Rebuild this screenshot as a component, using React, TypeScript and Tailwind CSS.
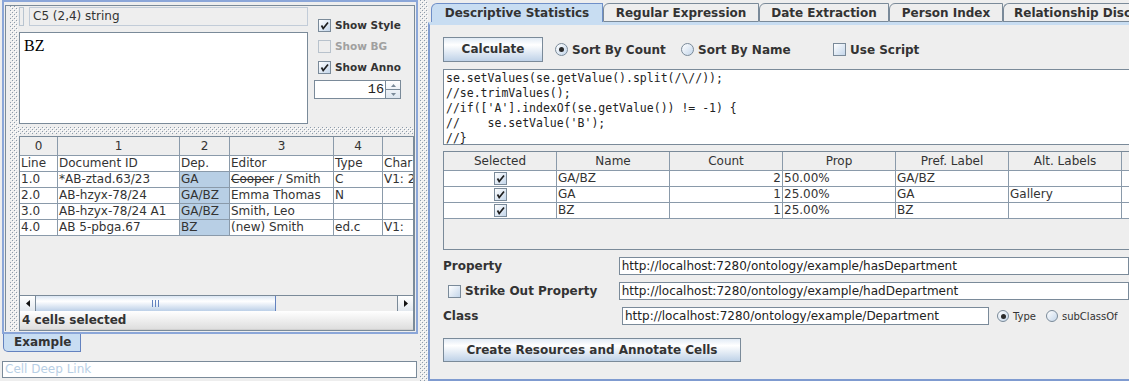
import React, { useId } from 'react';

const LINE = 'border-[#8a9aaa]';

function Bumps({ className }: { className: string }) {
  const id = useId().replace(/:/g, '');
  return (
    <div className={className}>
      <svg width="100%" height="100%">
        <defs>
          <pattern id={`b${id}`} width="4" height="4" patternUnits="userSpaceOnUse">
            <rect x="0" y="0" width="1" height="1" fill="#8e9cab" />
            <rect x="2" y="2" width="1" height="1" fill="#8e9cab" />
            <rect x="1" y="1" width="1" height="1" fill="#ffffff" />
            <rect x="3" y="3" width="1" height="1" fill="#ffffff" />
          </pattern>
        </defs>
        <rect width="100%" height="100%" fill={`url(#b${id})`} />
      </svg>
    </div>
  );
}

function CheckBox({ checked, disabled }: { checked?: boolean; disabled?: boolean }) {
  return (
    <span
      className={`inline-flex w-[13px] h-[13px] shrink-0 items-center justify-center border ${
        disabled
          ? 'border-[#b8c2cc] bg-[#eeeeee]'
          : 'border-[#7a8a99] bg-[linear-gradient(135deg,#ffffff,#c4d6ea)]'
      }`}
    >
      {checked && (
        <svg width="9" height="9" viewBox="0 0 9 9">
          <path d="M1.5 4.5 L3.2 7.5 L8 1.5" stroke="#1f1f1f" strokeWidth="1.7" fill="none" />
        </svg>
      )}
    </span>
  );
}

function Radio({ on, small }: { on?: boolean; small?: boolean }) {
  return (
    <span
      className={`inline-flex ${small ? 'w-[12px] h-[12px]' : 'w-[13px] h-[13px]'} shrink-0 items-center justify-center rounded-full border border-[#7a8a99] bg-[linear-gradient(135deg,#ffffff,#c4d6ea)]`}
    >
      {on && <span className="w-[5px] h-[5px] rounded-full bg-[#2a2a2a]" />}
    </span>
  );
}

const leftCols = ['w-[38px]', 'w-[122px]', 'w-[50px]', 'w-[104px]', 'w-[49px]', 'w-[40px]'];

const leftRows: React.ReactNode[][] = [
  ['Line', 'Document ID', 'Dep.', 'Editor', 'Type', 'Char'],
  ['1.0', '*AB-ztad.63/23', 'GA', <><s>Cooper</s> / Smith</>, 'C', 'V1: 2'],
  ['2.0', 'AB-hzyx-78/24', 'GA/BZ', 'Emma Thomas', 'N', ''],
  ['3.0', 'AB-hzyx-78/24 A1', 'GA/BZ', 'Smith, Leo', '', ''],
  ['4.0', 'AB 5-pbga.67', 'BZ', '(new) Smith', 'ed.c', 'V1:'],
];

const statRows = [
  ['GA/BZ', '2', '50.00%', 'GA/BZ', ''],
  ['GA', '1', '25.00%', 'GA', 'Gallery'],
  ['BZ', '1', '25.00%', 'BZ', ''],
];

const script = [
  'se.setValues(se.getValue().split(/\\//));',
  '//se.trimValues();',
  "//if(['A'].indexOf(se.getValue()) != -1) {",
  "//    se.setValue('B');",
  '//}',
];

const tabs = [
  { label: 'Descriptive Statistics', w: 'w-[172px]', active: true },
  { label: 'Regular Expression', w: 'w-[156px]' },
  { label: 'Date Extraction', w: 'w-[130px]' },
  { label: 'Person Index', w: 'w-[114px]' },
  { label: 'Relationship Disc', w: 'w-[126px]', last: true },
];

function CellEditor() {
  return (
    <div className="h-[121px] shrink-0 flex pl-[1px] pt-[1px]">
      <div className="w-[289px] shrink-0 flex flex-col">
        <div className="h-[19px] flex">
          <div className="w-[5px] border border-[#b8c4d0]" />
          <div className="ml-[5px] flex-1 border border-[#c2ccd8] pl-[3px] leading-[17px] text-[#333]">
            C5 (2,4) string
          </div>
        </div>
        <div className="mt-[6px] h-[92px] border border-[#7a8a99] bg-white px-[4px] pt-[1px] font-['Liberation_Serif',serif] text-[16px] text-black">
          BZ
        </div>
      </div>
      <div className="ml-[6px] w-[88px] shrink-0 flex flex-col pt-[12px]">
        {[
          { label: 'Show Style', checked: true },
          { label: 'Show BG', disabled: true },
          { label: 'Show Anno', checked: true },
        ].map((c) => (
          <div key={c.label} className="h-[13px] mb-[8px] flex items-center gap-[4px] pl-[4px]">
            <CheckBox checked={c.checked} disabled={c.disabled} />
            <span className={`text-[10.5px] font-bold ${c.disabled ? 'text-[#a0a0a0]' : 'text-[#333]'}`}>
              {c.label}
            </span>
          </div>
        ))}
        <div className="-mt-[2px] flex h-[19px] w-[87px] border border-[#7a8a99] bg-white">
          <div className="flex-1 text-right pr-[1px] leading-[17px] font-['Liberation_Mono',monospace] text-[13.5px] text-[#222]">
            16
          </div>
          <div className="w-[15px] border-l border-[#7a8a99] flex flex-col bg-[linear-gradient(#ffffff,#dde6f0)]">
            <div className="flex-1 border-b border-[#7a8a99] flex items-center justify-center">
              <svg width="5" height="3">
                <path d="M0 3 L2.5 0 L5 3Z" fill="#7a8a99" />
              </svg>
            </div>
            <div className="flex-1 flex items-center justify-center">
              <svg width="5" height="3">
                <path d="M0 0 L2.5 3 L5 0Z" fill="#7a8a99" />
              </svg>
            </div>
          </div>
        </div>
      </div>
    </div>
  );
}

function DataTable() {
  return (
    <div className="ml-[1px] mt-[2px] flex-1 min-h-0 flex flex-col border border-[#7a8a99] overflow-hidden">
      <div className="flex h-[19px] bg-[#eeeeee] shrink-0">
        {leftCols.map((w, i) => (
          <div key={i} className={`${w} shrink-0 border-r border-b ${LINE} text-center leading-[18px] text-[#333]`}>
            {i < 5 ? i : ''}
          </div>
        ))}
      </div>
      {leftRows.map((row, r) => (
        <div key={r} className="flex h-[16px] shrink-0 bg-white">
          {row.map((cell, i) => (
            <div
              key={i}
              className={`${leftCols[i]} shrink-0 border-r border-b ${LINE} pl-[1px] leading-[15px] whitespace-nowrap overflow-hidden ${
                i === 2 && r > 0 ? 'bg-[#b8cfe5]' : ''
              } text-[#333]`}
            >
              {cell}
            </div>
          ))}
        </div>
      ))}
      <div className="flex-1 bg-[#eeeeee]" />
      <div className="h-[16px] shrink-0 flex border-t border-[#7a8a99] bg-[#eeeeee]">
        <div className="w-[16px] shrink-0 border-r border-[#7a8a99] flex items-center justify-center bg-[linear-gradient(#ffffff,#e2e8ee)]">
          <svg width="4" height="7">
            <path d="M4 0 L0 3.5 L4 7Z" fill="#111" />
          </svg>
        </div>
        <div className="w-[240px] shrink-0 border-r border-[#6382bf] bg-[linear-gradient(#dbe6f3,#ffffff_35%,#bcd0e8)] flex items-center justify-center gap-[2px]">
          <span className="w-[1px] h-[7px] bg-[#6382bf]" />
          <span className="w-[1px] h-[7px] bg-[#6382bf]" />
          <span className="w-[1px] h-[7px] bg-[#6382bf]" />
        </div>
        <div className="flex-1" />
        <div className="w-[16px] shrink-0 border-l border-[#7a8a99] flex items-center justify-center bg-[linear-gradient(#ffffff,#e2e8ee)]">
          <svg width="4" height="7">
            <path d="M0 0 L4 3.5 L0 7Z" fill="#111" />
          </svg>
        </div>
      </div>
      <div className="h-[19px] shrink-0 bg-[linear-gradient(#ffffff,#dedede)] pl-[2px] leading-[19px] font-bold text-[12px] text-[#333] border-b border-[#d0d0d0]">
        4 cells selected
      </div>
    </div>
  );
}

function LeftPane() {
  return (
    <div className="w-[420px] shrink-0 flex flex-col">
      <div className="ml-[2px] w-[416px] h-[334px] border-2 border-[#8ba6d8] pt-[3px] px-[1px] pb-[1px]">
        <div className="h-full flex border-l border-t border-r border-[#7a8a99]">
          <div className="w-[4px] shrink-0 bg-[#eeeeee]" />
          <Bumps className="w-[8px] h-full shrink-0" />
          <div className="flex-1 min-w-0 flex flex-col overflow-hidden">
            <CellEditor />
            <Bumps className="h-[7px] w-full shrink-0" />
            <DataTable />
          </div>
        </div>
      </div>
      <div className="ml-[3px] w-[78px] h-[18px] bg-[#c8ddf2] border-l border-r border-b border-[#6382bf] rounded-bl-[5px] pl-[10px] leading-[17px] font-bold text-[#333]">
        Example
      </div>
      <div className="ml-[2px] mt-[9px] w-[415px] h-[17px] border border-[#7a8a99] bg-white pl-[2px] leading-[15px] text-[#b8cfe5]">
        Cell Deep Link
      </div>
    </div>
  );
}

function StatsTable() {
  const heads = ['Selected', 'Name', 'Count', 'Prop', 'Pref. Label', 'Alt. Labels', ''];
  return (
    <div className="mt-[6px] h-[99px] w-[700px] border border-[#7a8a99] flex flex-col">
      <div className="flex h-[19px] shrink-0">
        {heads.map((h, i) => (
          <div key={i} className={`w-[113px] shrink-0 border-r border-b ${LINE} text-center leading-[18px] text-[#333]`}>
            {h}
          </div>
        ))}
      </div>
      {statRows.map((row, r) => (
        <div key={r} className="flex h-[16px] shrink-0 bg-white">
          <div className={`w-[113px] shrink-0 border-r border-b ${LINE} flex items-center justify-center`}>
            <CheckBox checked />
          </div>
          {row.map((cell, i) => (
            <div
              key={i}
              className={`w-[113px] shrink-0 border-r border-b ${LINE} px-[1px] leading-[15px] text-[#333] ${
                i === 1 ? 'text-right' : ''
              }`}
            >
              {cell}
            </div>
          ))}
          <div className={`w-[113px] shrink-0 border-b ${LINE}`} />
        </div>
      ))}
    </div>
  );
}

function RightPane() {
  return (
    <div className="flex-1 min-w-0 flex flex-col overflow-hidden">
      <div className="h-[22px] shrink-0 flex items-end pl-[3px]">
        {tabs.map((t) => (
          <div
            key={t.label}
            className={`${t.w} shrink-0 h-[19px] rounded-tl-[6px] border-t border-l text-center leading-[18px] font-bold whitespace-nowrap overflow-hidden text-[#333] ${
              t.active ? 'bg-[#c8ddf2] border-r border-[#6f8fc8]' : 'bg-[#eeeeee] border-[#7a8a99] border-b'
            } ${t.last ? 'border-r-0 text-left pl-[10px]' : 'border-r'}`}
          >
            {t.label}
          </div>
        ))}
      </div>
      <div className="flex-1 border-l-2 border-l-[#7f9bd0] border-t-[3px] border-t-[#c8ddf2] border-b-2 border-b-[#7f9bd0] pl-[13px] pt-[12px]">
        <div className="h-[25px] flex items-center">
          <div className="w-[100px] h-[25px] border border-[#7a8a99] bg-[linear-gradient(#e2ebf5,#ffffff_30%,#bfd2e8)] text-center leading-[23px] font-bold text-[#333]">
            Calculate
          </div>
          <div className="ml-[12px] w-[126px] flex items-center gap-[4px]">
            <Radio on />
            <span className="font-bold text-[#333]">Sort By Count</span>
          </div>
          <div className="w-[152px] flex items-center gap-[4px]">
            <Radio />
            <span className="font-bold text-[#333]">Sort By Name</span>
          </div>
          <div className="flex items-center gap-[4px]">
            <CheckBox />
            <span className="font-bold text-[#333]">Use Script</span>
          </div>
        </div>
        <div className="mt-[7px] h-[76px] w-[700px] border border-[#7a8a99] bg-white pl-[2px] pt-[1px] font-['DejaVu_Sans_Mono',monospace] text-[11.5px] leading-[15px] text-[#222] whitespace-pre">
          {script.map((l, i) => (
            <div key={i}>{l}</div>
          ))}
        </div>
        <StatsTable />
        <div className="mt-[7px] flex flex-col gap-[7px]">
          <div className="h-[18px] flex items-center">
            <span className="w-[179px] font-bold text-[#333]">Property</span>
            <div className="w-[520px] h-[18px] border border-[#7a8a99] bg-white pl-[2px] leading-[16px] text-[#222]">
              http://localhost:7280/ontology/example/hasDepartment
            </div>
          </div>
          <div className="h-[18px] flex items-center">
            <div className="w-[179px] flex items-center gap-[4px] pl-[5px]">
              <CheckBox />
              <span className="font-bold text-[#333]">Strike Out Property</span>
            </div>
            <div className="w-[520px] h-[18px] border border-[#7a8a99] bg-white pl-[2px] leading-[16px] text-[#222]">
              http://localhost:7280/ontology/example/hadDepartment
            </div>
          </div>
          <div className="h-[18px] flex items-center">
            <span className="w-[179px] font-bold text-[#333]">Class</span>
            <div className="w-[367px] h-[18px] border border-[#7a8a99] bg-white pl-[2px] leading-[16px] text-[#222]">
              http://localhost:7280/ontology/example/Department
            </div>
            <div className="ml-[8px] flex items-center gap-[4px]">
              <Radio on small />
              <span className="text-[10px] text-[#333]">Type</span>
            </div>
            <div className="ml-[10px] flex items-center gap-[4px]">
              <Radio small />
              <span className="text-[10px] text-[#333]">subClassOf</span>
            </div>
          </div>
        </div>
        <div className="mt-[13px] w-[298px] h-[24px] border border-[#7a8a99] bg-[linear-gradient(#e2ebf5,#ffffff_30%,#bfd2e8)] text-center leading-[22px] font-bold text-[#333]">
          Create Resources and Annotate Cells
        </div>
      </div>
    </div>
  );
}

export default function App() {
  return (
    <div className="w-[1129px] h-[381px] bg-[#eeeeee] flex overflow-hidden font-['DejaVu_Sans',sans-serif] text-[12px] text-[#333]">
      <LeftPane />
      <Bumps className="w-[8px] h-full shrink-0" />
      <RightPane />
    </div>
  );
}
